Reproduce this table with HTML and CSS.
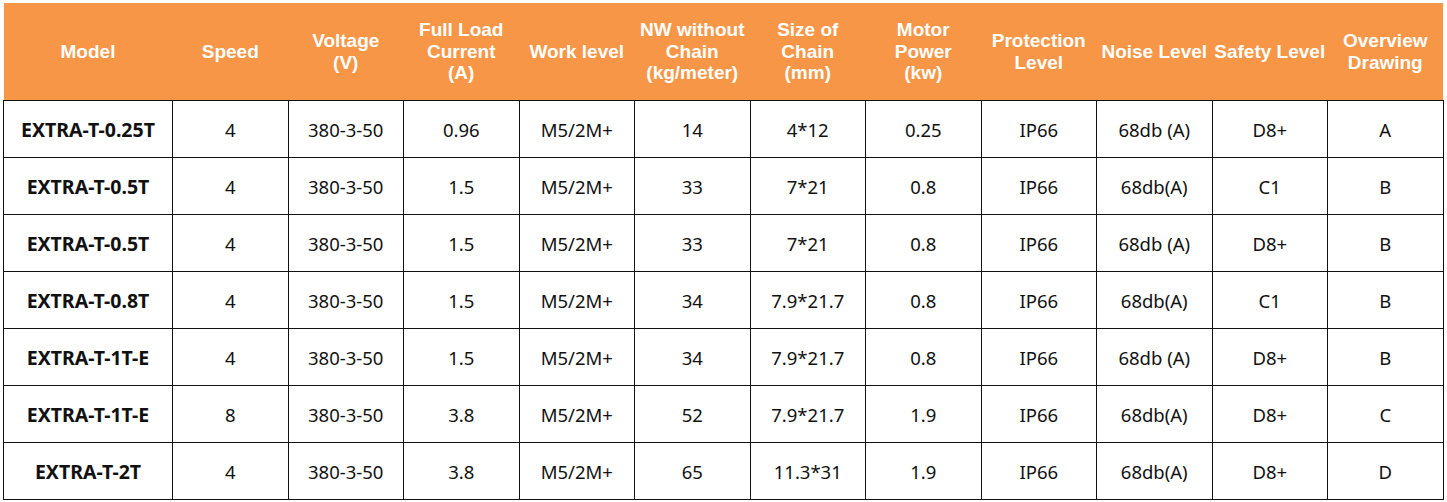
FILE: index.html
```html
<!DOCTYPE html>
<html>
<head>
<meta charset="utf-8">
<link rel="stylesheet" href="styles.css">
</head>
<body>
<table class="spec">
  <colgroup>
    <col class="c-model"><col class="c"><col class="c"><col class="c"><col class="c"><col class="c"><col class="c"><col class="c"><col class="c"><col class="c"><col class="c"><col class="c">
  </colgroup>
  <thead>
    <tr>
      <th>Model</th>
      <th>Speed</th>
      <th>Voltage<br>(V)</th>
      <th>Full Load<br>Current<br>(A)</th>
      <th>Work level</th>
      <th>NW without<br>Chain<br>(kg/meter)</th>
      <th>Size of<br>Chain<br>(mm)</th>
      <th>Motor<br>Power<br>(kw)</th>
      <th>Protection<br>Level</th>
      <th>Noise Level</th>
      <th>Safety Level</th>
      <th>Overview<br>Drawing</th>
    </tr>
  </thead>
  <tbody>
    <tr><td class="model">EXTRA-T-0.25T</td><td>4</td><td>380-3-50</td><td>0.96</td><td>M5/2M+</td><td>14</td><td>4*12</td><td>0.25</td><td>IP66</td><td>68db (A)</td><td>D8+</td><td>A</td></tr>
    <tr><td class="model">EXTRA-T-0.5T</td><td>4</td><td>380-3-50</td><td>1.5</td><td>M5/2M+</td><td>33</td><td>7*21</td><td>0.8</td><td>IP66</td><td>68db(A)</td><td>C1</td><td>B</td></tr>
    <tr><td class="model">EXTRA-T-0.5T</td><td>4</td><td>380-3-50</td><td>1.5</td><td>M5/2M+</td><td>33</td><td>7*21</td><td>0.8</td><td>IP66</td><td>68db (A)</td><td>D8+</td><td>B</td></tr>
    <tr><td class="model">EXTRA-T-0.8T</td><td>4</td><td>380-3-50</td><td>1.5</td><td>M5/2M+</td><td>34</td><td>7.9*21.7</td><td>0.8</td><td>IP66</td><td>68db(A)</td><td>C1</td><td>B</td></tr>
    <tr><td class="model">EXTRA-T-1T-E</td><td>4</td><td>380-3-50</td><td>1.5</td><td>M5/2M+</td><td>34</td><td>7.9*21.7</td><td>0.8</td><td>IP66</td><td>68db (A)</td><td>D8+</td><td>B</td></tr>
    <tr><td class="model">EXTRA-T-1T-E</td><td>8</td><td>380-3-50</td><td>3.8</td><td>M5/2M+</td><td>52</td><td>7.9*21.7</td><td>1.9</td><td>IP66</td><td>68db(A)</td><td>D8+</td><td>C</td></tr>
    <tr><td class="model">EXTRA-T-2T</td><td>4</td><td>380-3-50</td><td>3.8</td><td>M5/2M+</td><td>65</td><td>11.3*31</td><td>1.9</td><td>IP66</td><td>68db(A)</td><td>D8+</td><td>D</td></tr>
  </tbody>
</table>
</body>
</html>
```

FILE: styles.css
```css
html, body {
  margin: 0;
  padding: 0;
  background: #ffffff;
}
body {
  padding: 3px 0 0 3px;
  font-family: "Noto Sans", "Open Sans", "Liberation Sans", sans-serif;
}
.spec {
  border-collapse: collapse;
  table-layout: fixed;
  width: 1440px;
}
.c-model { width: 169px; }
.c { width: 115.5px; }
.spec th {
  background: #f79646;
  color: #ffffff;
  font-family: "Liberation Sans", Arial, sans-serif;
  font-weight: 700;
  font-size: 19px;
  line-height: 21.5px;
  height: 97px;
  padding: 0;
  text-align: center;
  vertical-align: middle;
  border: none;
  white-space: nowrap;
}
.spec td {
  border: 1px solid #111111;
  height: 56px;
  padding: 0;
  font-size: 18.5px;
  color: #111111;
  text-align: center;
  vertical-align: middle;
}
.spec td.model {
  font-weight: 700;
  font-size: 19.5px;
}
```
